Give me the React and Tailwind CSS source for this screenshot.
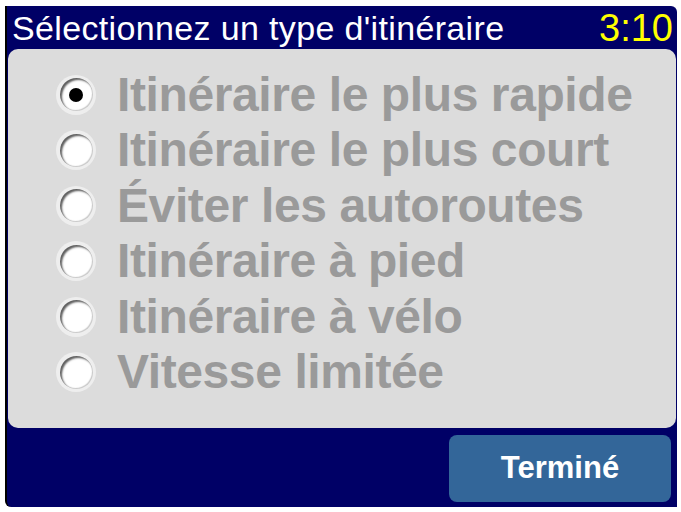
import { useState } from "react";

const routeTypes = [
  "Itinéraire le plus rapide",
  "Itinéraire le plus court",
  "Éviter les autoroutes",
  "Itinéraire à pied",
  "Itinéraire à vélo",
  "Vitesse limitée",
];

function Radio({ checked }) {
  return (
    <span className="flex h-[40px] w-[40px] shrink-0 items-center justify-center rounded-full bg-[#eeeeee]">
      <span className="flex h-[33px] w-[33px] items-center justify-center rounded-full bg-white shadow-[inset_2px_2px_2px_#5f5f5f,inset_-1px_-1px_1px_#c8c8c8]">
        {checked && <span className="h-[14px] w-[14px] rounded-full bg-black" />}
      </span>
    </span>
  );
}

export default function App() {
  const [selected, setSelected] = useState(0);

  return (
    <div className="h-[512px] w-[681px] bg-white pl-[5px] pt-[6px] font-['Liberation_Sans',Arial,sans-serif]">
      <div className="flex h-[501px] w-[672px] flex-col rounded-tr-[6px] rounded-bl-[6px] border-l-2 border-black bg-[#000066]">
        {/* Title bar */}
        <div className="flex h-[43px] items-center justify-between pl-[5px] pr-[4px]">
          <h1 className="text-[34px] leading-none tracking-[0.35px] text-white">Sélectionnez un type d'itinéraire</h1>
          <span className="text-[38px] leading-none text-[#ffff00]">3:10</span>
        </div>

        {/* Options */}
        <div className="mx-[1px] flex h-[379px] flex-col rounded-[10px] bg-[#dcdcdc] pl-[48px] pt-[18px]">
          {routeTypes.map((label, i) => (
            <button
              key={label}
              onClick={() => setSelected(i)}
              className="flex h-[55.5px] items-center gap-[21px] text-left"
            >
              <Radio checked={selected === i} />
              <span className="text-[48px] font-bold leading-none tracking-[-0.4px] text-[#9a9a9a]">
                {label}
              </span>
            </button>
          ))}
        </div>

        {/* Footer */}
        <div className="flex flex-1 justify-end pr-[6px] pt-[7px] pb-[5px]">
          <button className="flex w-[222px] items-center justify-center rounded-[8px] bg-[#336699] text-[31px] font-bold text-white">
            Terminé
          </button>
        </div>
      </div>
    </div>
  );
}
